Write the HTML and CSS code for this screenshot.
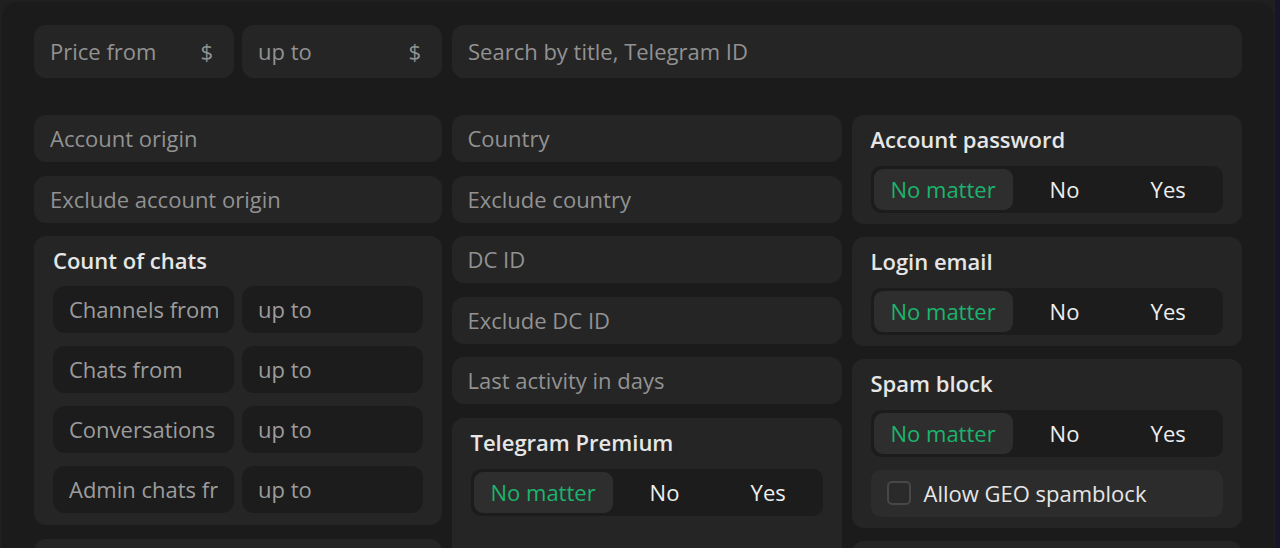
FILE: index.html
```html
<!DOCTYPE html>
<html lang="en">
<head>
<meta charset="utf-8">
<title>Filters</title>
<link rel="stylesheet" href="styles.css">
</head>
<body>
<div class="panel">
  <div class="top-row">
    <div class="field big price"><input type="text" placeholder="Price from"><span class="suffix">$</span></div>
    <div class="field big price"><input type="text" placeholder="up to"><span class="suffix">$</span></div>
    <div class="field big search"><input type="text" placeholder="Search by title, Telegram ID"></div>
  </div>

  <div class="filters">
    <div class="col col-wide">
      <div class="field"><input type="text" placeholder="Account origin"></div>
      <div class="field"><input type="text" placeholder="Exclude account origin"></div>
      <div class="card card-chats">
        <div class="card-title">Count of chats</div>
        <div class="range-list">
          <div class="range"><div class="field dark"><input type="text" placeholder="Channels from"></div><div class="field dark"><input type="text" placeholder="up to"></div></div>
          <div class="range"><div class="field dark"><input type="text" placeholder="Chats from"></div><div class="field dark"><input type="text" placeholder="up to"></div></div>
          <div class="range"><div class="field dark"><input type="text" placeholder="Conversations from"></div><div class="field dark"><input type="text" placeholder="up to"></div></div>
          <div class="range"><div class="field dark"><input type="text" placeholder="Admin chats from"></div><div class="field dark"><input type="text" placeholder="up to"></div></div>
        </div>
      </div>
      <div class="card card-empty"></div>
    </div>

    <div class="col">
      <div class="field"><input type="text" placeholder="Country"></div>
      <div class="field"><input type="text" placeholder="Exclude country"></div>
      <div class="field"><input type="text" placeholder="DC ID"></div>
      <div class="field"><input type="text" placeholder="Exclude DC ID"></div>
      <div class="field"><input type="text" placeholder="Last activity in days"></div>
      <div class="card card-tall">
        <div class="card-title">Telegram Premium</div>
        <div class="seg">
          <button class="seg-btn active">No matter</button>
          <button class="seg-btn">No</button>
          <button class="seg-btn">Yes</button>
        </div>
      </div>
    </div>

    <div class="col col-cards">
      <div class="card">
        <div class="card-title">Account password</div>
        <div class="seg">
          <button class="seg-btn active">No matter</button>
          <button class="seg-btn">No</button>
          <button class="seg-btn">Yes</button>
        </div>
      </div>
      <div class="card">
        <div class="card-title">Login email</div>
        <div class="seg">
          <button class="seg-btn active">No matter</button>
          <button class="seg-btn">No</button>
          <button class="seg-btn">Yes</button>
        </div>
      </div>
      <div class="card">
        <div class="card-title">Spam block</div>
        <div class="seg">
          <button class="seg-btn active">No matter</button>
          <button class="seg-btn">No</button>
          <button class="seg-btn">Yes</button>
        </div>
        <label class="check-row"><span class="checkbox"></span><span class="check-label">Allow GEO spamblock</span></label>
      </div>
      <div class="card card-empty"></div>
    </div>
  </div>
</div>
</body>
</html>
```

FILE: styles.css
```css
html, body {
  margin: 0;
  padding: 0;
  height: 100%;
  overflow: hidden;
}

body {
  background: linear-gradient(to right, #1f1f1f 1275px, #16152a 1275px);
  font-family: "Open Sans", "Noto Sans", sans-serif;
  font-size: 22px;
  color: #e8e8e8;
}

.panel {
  margin: 2px 0 0 2px;
  width: 1272px;
  box-sizing: border-box;
  min-height: 700px;
  padding: 23px 32px;
  background: #1b1b1b;
  border-radius: 16px;
}

.top-row {
  display: flex;
  gap: 8px;
}

.top-row .price {
  width: 200px;
  flex: none;
}

.top-row .search {
  flex: 1;
  margin-left: 2px;
}

.field {
  display: flex;
  align-items: center;
  box-sizing: border-box;
  height: 47px;
  padding: 0 16px 1px;
  background: #252525;
  border-radius: 12px;
  overflow: hidden;
}

.field.big {
  height: 53px;
  padding-bottom: 2px;
}

.field.price {
  padding-right: 21px;
}

.field input {
  flex: 1;
  min-width: 0;
  border: none;
  outline: none;
  background: transparent;
  padding: 0;
  margin: 0;
  font: inherit;
  color: #e8e8e8;
}

.field input::placeholder {
  color: #929292;
  opacity: 1;
}

.suffix {
  color: #929292;
  flex: none;
}

.filters {
  margin-top: 37px;
  display: grid;
  grid-template-columns: 408px 1fr 1fr;
  column-gap: 9.5px;
  align-items: start;
}

.col {
  display: flex;
  flex-direction: column;
  gap: 13.5px;
}

.col-cards {
  gap: 13px;
}

.card {
  background: #252525;
  border-radius: 12px;
  padding: 10px 19px 11px;
}

.card-title {
  font-weight: 600;
  line-height: 28px;
  color: #e6e6e6;
  margin-bottom: 13px;
}

.card-chats {
  padding-bottom: 12px;
}

.card-chats .card-title {
  margin-bottom: 12px;
}

.card-tall {
  min-height: 160px;
}

.card-empty {
  min-height: 120px;
}

.range-list {
  display: flex;
  flex-direction: column;
  gap: 13px;
}

.range {
  display: grid;
  grid-template-columns: 1fr 1fr;
  gap: 8px;
}

.field.dark {
  background: #1c1c1c;
}

.field.dark input::placeholder {
  color: #9c9c9c;
}

.seg {
  display: grid;
  grid-template-columns: auto 1fr 1fr;
  box-sizing: border-box;
  height: 47px;
  padding: 3px;
  background: #1c1c1c;
  border-radius: 10px;
}

.seg-btn {
  border: none;
  background: transparent;
  font: inherit;
  color: #eeeeee;
  padding: 0 17px 1px;
  border-radius: 9px;
  cursor: pointer;
}

.seg-btn.active {
  background: #2e2e2e;
  color: #1bb46c;
}

.check-row {
  display: flex;
  align-items: center;
  gap: 13px;
  box-sizing: border-box;
  height: 47px;
  margin-top: 13px;
  padding: 0 16px 1px;
  background: #2c2c2c;
  border-radius: 10px;
  color: #e6e6e6;
}

.checkbox {
  width: 24px;
  height: 24px;
  box-sizing: border-box;
  border: 2px solid #474747;
  border-radius: 5px;
  background: #2a2a2a;
  flex: none;
}
```
